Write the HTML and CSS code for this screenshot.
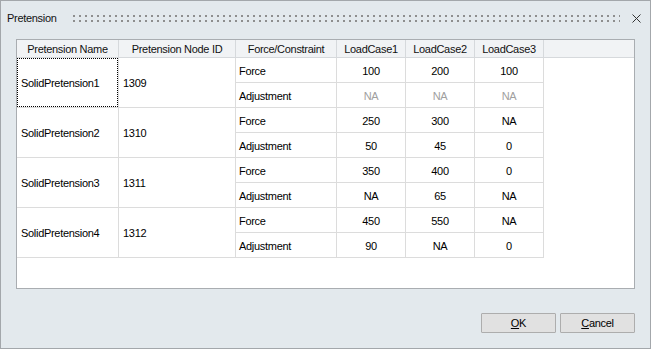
FILE: index.html
```html
<!DOCTYPE html>
<html lang="en">
<head>
  <meta charset="UTF-8">
  <title>Pretension</title>
  <link rel="stylesheet" href="styles.css">
</head>
<body>
  <div class="window">
    <div class="titlebar">
      <span class="title">Pretension</span>
      <div class="grip"></div>
      <svg class="close" width="9" height="9" viewBox="0 0 9 9">
        <path d="M0.5 0.5 L8.5 8.5 M8.5 0.5 L0.5 8.5" stroke="#333" stroke-width="1" fill="none"/>
      </svg>
    </div>

    <div class="grid">
      <div class="grid-head">
        <div class="hcell">Pretension Name</div>
        <div class="hcell">Pretension Node ID</div>
        <div class="hcell">Force/Constraint</div>
        <div class="hcell">LoadCase1</div>
        <div class="hcell">LoadCase2</div>
        <div class="hcell">LoadCase3</div>
        <div class="hcell"></div>
      </div>

      <div class="grid-body">
        <div class="cell span focused">SolidPretension1</div>
        <div class="cell span">1309</div>
        <div class="cell">Force</div>
        <div class="cell num">100</div>
        <div class="cell num">200</div>
        <div class="cell num">100</div>
        <div class="cell">Adjustment</div>
        <div class="cell num muted">NA</div>
        <div class="cell num muted">NA</div>
        <div class="cell num muted">NA</div>

        <div class="cell span">SolidPretension2</div>
        <div class="cell span">1310</div>
        <div class="cell">Force</div>
        <div class="cell num">250</div>
        <div class="cell num">300</div>
        <div class="cell num">NA</div>
        <div class="cell">Adjustment</div>
        <div class="cell num">50</div>
        <div class="cell num">45</div>
        <div class="cell num">0</div>

        <div class="cell span">SolidPretension3</div>
        <div class="cell span">1311</div>
        <div class="cell">Force</div>
        <div class="cell num">350</div>
        <div class="cell num">400</div>
        <div class="cell num">0</div>
        <div class="cell">Adjustment</div>
        <div class="cell num">NA</div>
        <div class="cell num">65</div>
        <div class="cell num">NA</div>

        <div class="cell span">SolidPretension4</div>
        <div class="cell span">1312</div>
        <div class="cell">Force</div>
        <div class="cell num">450</div>
        <div class="cell num">550</div>
        <div class="cell num">NA</div>
        <div class="cell">Adjustment</div>
        <div class="cell num">90</div>
        <div class="cell num">NA</div>
        <div class="cell num">0</div>
      </div>
    </div>

    <div class="buttons">
      <button class="btn"><u>O</u>K</button>
      <button class="btn"><u>C</u>ancel</button>
    </div>
  </div>
</body>
</html>
```

FILE: styles.css
```css
body {
  margin: 0;
  font-family: 'Liberation Sans', Arial, sans-serif;
  font-size: 11px;
  letter-spacing: -0.3px;
  color: #000;
}

.window {
  width: 651px;
  height: 349px;
  box-sizing: border-box;
  border: 1px solid #a3a7ab;
  background: #e3e9ed;
  display: flex;
  flex-direction: column;
  padding: 0 15px 15px;
}

/* Title bar */
.titlebar {
  height: 34px;
  display: flex;
  align-items: center;
  margin: 0 -15px;
  padding-left: 6px;
  padding-right: 9px;
}

.title {
  color: #111;
}

.grip {
  flex: 1;
  height: 7px;
  margin-left: 16px;
  margin-right: 12px;
  background-color: #8e8e8e;
  background-image:
    linear-gradient(to bottom, transparent 2px, #e3e9ed 2px, #e3e9ed 5px, transparent 5px),
    repeating-linear-gradient(to right, transparent 0 2px, #e3e9ed 2px 6px);
  margin-top: 1px;
}

.close {
  display: block;
}

/* Data grid */
.grid {
  margin-top: 4px;
  height: 250px;
  box-sizing: border-box;
  border: 1px solid #a9adb1;
  background: #fff;
}

.grid-head {
  display: grid;
  grid-template-columns: 101px 116px 100px 68px 68px 68px 1fr;
  gap: 1px;
  padding-bottom: 1px;
  background: #d6d9dc;
}

.hcell {
  height: 17px;
  background: #f1f3f5;
  display: flex;
  align-items: center;
  justify-content: center;
  color: #111;
}

.grid-body {
  display: grid;
  grid-template-columns: 101px 116px 100px 68px 68px 68px;
  grid-auto-rows: 24px;
  gap: 1px;
  padding: 0 1px 1px 0;
  width: max-content;
  background: #dcdcdc;
}

.cell {
  background: #fff;
  display: flex;
  align-items: center;
  padding-left: 3px;
  padding-top: 1px;
}

.cell.span {
  grid-row: span 2;
  padding-left: 4px;
}

.cell.num {
  justify-content: center;
  padding-left: 0;
}

.cell.muted {
  color: #a0a0a0;
}

.cell.focused {
  outline: 1px dotted #000;
  outline-offset: -1px;
}

/* Buttons */
.buttons {
  margin-top: 24px;
  display: flex;
  justify-content: flex-end;
  gap: 4px;
}

.btn {
  width: 75px;
  height: 20px;
  margin: 0;
  padding: 0;
  font-family: inherit;
  font-size: 11px;
  letter-spacing: -0.3px;
  color: #000;
  background: #e1e1e1;
  border: 1px solid #adadad;
  border-radius: 1px;
}
```
